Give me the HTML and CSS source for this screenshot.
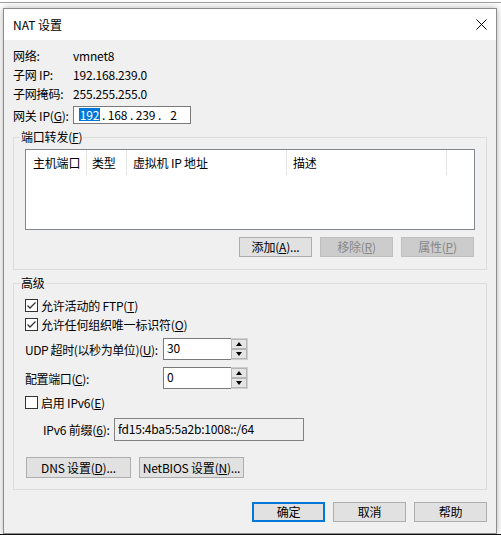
FILE: index.html
```html
<!DOCTYPE html>
<html lang="zh-CN">
<head>
<meta charset="utf-8">
<title>NAT 设置</title>
<link rel="stylesheet" href="styles.css">
</head>
<body>
<div class="topline"></div>
<div class="dialog">
  <div class="titlebar">
    <span class="title">NAT 设置</span>
    <svg class="close" width="11" height="11" viewBox="0 0 11 11"><path d="M0.5 0.5 L10.5 10.5 M10.5 0.5 L0.5 10.5" stroke="#000" stroke-width="1" fill="none"/></svg>
  </div>
  <div class="body">
    <div class="info-row"><span class="lbl">网络:</span><span>vmnet8</span></div>
    <div class="info-row"><span class="lbl">子网 IP:</span><span>192.168.239.0</span></div>
    <div class="info-row"><span class="lbl">子网掩码:</span><span>255.255.255.0</span></div>
    <div class="gw-row">
      <span class="lbl">网关 IP(<u>G</u>):</span>
      <div class="ipbox">
        <span class="seg"><span class="sel">192</span></span><span class="dot">.</span><span class="seg">168</span><span class="dot">.</span><span class="seg">239</span><span class="dot">.</span><span class="seg">2</span>
      </div>
    </div>

    <fieldset class="group g1">
      <legend>端口转发(<u>F</u>)</legend>
      <div class="list">
        <div class="lhead">
          <div class="col c1">主机端口</div>
          <div class="col c2">类型</div>
          <div class="col c3">虚拟机 IP 地址</div>
          <div class="col c4">描述</div>
        </div>
      </div>
      <div class="btnrow">
        <div class="btn">添加(<u>A</u>)...</div>
        <div class="btn disabled">移除(<u>R</u>)</div>
        <div class="btn disabled">属性(<u>P</u>)</div>
      </div>
    </fieldset>

    <fieldset class="group g2">
      <legend>高级</legend>
      <div class="chk-row first">
        <span class="box"><svg width="11" height="11" viewBox="0 0 11 11"><polyline points="1.5,5.5 4,8 9.5,2.5" fill="none" stroke="#333" stroke-width="1.3"/></svg></span>
        <span>允许活动的 FTP(<u>T</u>)</span>
      </div>
      <div class="chk-row">
        <span class="box"><svg width="11" height="11" viewBox="0 0 11 11"><polyline points="1.5,5.5 4,8 9.5,2.5" fill="none" stroke="#333" stroke-width="1.3"/></svg></span>
        <span>允许任何组织唯一标识符(<u>O</u>)</span>
      </div>
      <div class="spin-row r1">
        <span class="spin-lbl">UDP 超时(以秒为单位)(<u>U</u>):</span>
        <div class="spin-input">30</div>
        <div class="spinner">
          <div class="sbtn"><span class="up"></span></div>
          <div class="sbtn"><span class="down"></span></div>
        </div>
      </div>
      <div class="spin-row r2">
        <span class="spin-lbl">配置端口(<u>C</u>):</span>
        <div class="spin-input">0</div>
        <div class="spinner">
          <div class="sbtn"><span class="up"></span></div>
          <div class="sbtn"><span class="down"></span></div>
        </div>
      </div>
      <div class="chk-row r3">
        <span class="box"></span>
        <span>启用 IPv6(<u>E</u>)</span>
      </div>
      <div class="v6-row">
        <span class="v6-lbl">IPv6 前缀(<u>6</u>):</span>
        <div class="v6-input">fd15:4ba5:5a2b:1008::/64</div>
      </div>
      <div class="dns-row">
        <div class="btn wide">DNS 设置(<u>D</u>)...</div>
        <div class="btn wide">NetBIOS 设置(<u>N</u>)...</div>
      </div>
    </fieldset>

    <div class="footer">
      <div class="btn default">确定</div>
      <div class="btn">取消</div>
      <div class="btn">帮助</div>
    </div>
  </div>
</div>
<div class="floor"></div>
</body>
</html>
```
FILE: styles.css
```css
* { box-sizing: border-box; }
html, body { margin: 0; padding: 0; }
body {
  width: 501px;
  height: 535px;
  overflow: hidden;
  background: #fff;
  font-family: "Microsoft YaHei UI", "Noto Sans CJK SC", sans-serif;
  font-size: 12px;
  letter-spacing: -0.2px;
  color: #000;
}
u { text-decoration: underline; text-underline-offset: 1px; }

.topline { height: 3px; border-bottom: 1px solid #a0a0a0; }

.dialog {
  margin: 5px 0 0 3px;
  width: 494px;
  height: 526px;
  border: 1px solid #8c8c8c;
  background: #f0f0f0;
  box-shadow: 0 0 7px rgba(0, 0, 0, 0.3);
  display: flex;
  flex-direction: column;
}
.floor { height: 10px; background: #111; }

.titlebar {
  height: 31px;
  background: #fff;
  display: flex;
  align-items: center;
  justify-content: space-between;
  padding: 0 9px 0 9px;
  flex: none;
}
.title { font-size: 12px; line-height: 16px; letter-spacing: 0; }
.close { display: block; margin-top: -1px; }

.body { flex: 1; padding: 6px 9px 0 9px; }

.info-row { height: 19px; line-height: 19px; display: flex; white-space: nowrap; }
.lbl { display: inline-block; width: 60px; flex: none; white-space: nowrap; }

.gw-row { margin-top: 3px; height: 18px; display: flex; align-items: center; }
.ipbox {
  width: 118px;
  height: 18px;
  border: 1px solid #7a7a7a;
  background: #fff;
  display: flex;
  align-items: center;
  padding-left: 4px;
}
.seg { width: 23px; text-align: center; line-height: 14px; }
.dot { width: 5px; text-align: center; line-height: 14px; }
.sel { background: #0078d7; color: #fff; padding: 0 1px; line-height: 13px; display: inline-block; }

.group {
  margin: 6px 0 0 0;
  border: 1px solid #dcdcdc;
  min-width: 0;
}
.group legend {
  margin-left: -5px;
  padding: 0 1px;
  line-height: 14px;
  height: 14px;
  white-space: nowrap;
}
.g1 { padding: 5px 11px 12px 11px; }
.g2 { padding: 6px 11px 11px 11px; }

.list { height: 81px; border: 1px solid #828790; background: #fff; }
.lhead { display: flex; height: 25px; }
.col { border-right: 1px solid #e5e5e5; line-height: 25px; height: 25px; white-space: nowrap; }
.c1 { width: 61px; padding-left: 7px; }
.c2 { width: 40px; padding-left: 5px; }
.c3 { width: 160px; padding-left: 6px; }
.c4 { width: 160px; padding-left: 6px; }

.btn {
  width: 73px;
  height: 20px;
  border: 1px solid #adadad;
  background: #e1e1e1;
  display: flex;
  align-items: center;
  justify-content: center;
  line-height: 16px;
  white-space: nowrap;
}
.btn.disabled { background: #cccccc; border-color: #bfbfbf; color: #888; }
.btn.default { border: 2px solid #0078d7; }
.btn.wide { width: 105px; height: 21px; }

.btnrow { margin-top: 7px; display: flex; justify-content: flex-end; gap: 8px; padding-right: 1px; }

.chk-row { height: 19px; display: flex; align-items: center; white-space: nowrap; }
.chk-row.r3 { margin-top: 4px; }
.box {
  width: 13px;
  height: 13px;
  border: 1px solid #333;
  background: #fff;
  margin-right: 3px;
  flex: none;
  display: block;
}
.box svg { display: block; }

.spin-row { height: 22px; display: flex; align-items: center; }
.spin-row.r1 { margin-top: 4px; }
.spin-row.r2 { margin-top: 7px; }
.spin-lbl { width: 138px; flex: none; white-space: nowrap; letter-spacing: -0.4px; }
.spin-input {
  width: 68px;
  height: 22px;
  border: 1px solid #7a7a7a;
  border-right: none;
  background: #fff;
  padding: 1px 0 0 3px;
  line-height: 16px;
  flex: none;
}
.spinner {
  width: 17px;
  height: 22px;
  display: flex;
  flex-direction: column;
  border: 1px solid #cfcfcf;
  border-left: none;
  background: #fff;
  flex: none;
}
.sbtn {
  flex: 1;
  border: 1px solid #b5b5b5;
  background: #e5e5e5;
  display: flex;
  align-items: center;
  justify-content: center;
}
.up, .down { width: 0; height: 0; border-left: 3.5px solid transparent; border-right: 3.5px solid transparent; }
.up { border-bottom: 4px solid #000; }
.down { border-top: 4px solid #000; }

.v6-row { margin-top: 6px; height: 23px; display: flex; align-items: center; }
.v6-lbl { width: 89px; padding-left: 18px; flex: none; white-space: nowrap; }
.v6-input {
  width: 190px;
  height: 23px;
  border: 1px solid #838383;
  background: #f0f0f0;
  padding-left: 3px;
  line-height: 19px;
  white-space: nowrap;
}

.dns-row { margin-top: 16px; display: flex; gap: 8px; padding-left: 1px; }

.footer { margin-top: 12px; display: flex; justify-content: flex-end; gap: 8px; }
```
